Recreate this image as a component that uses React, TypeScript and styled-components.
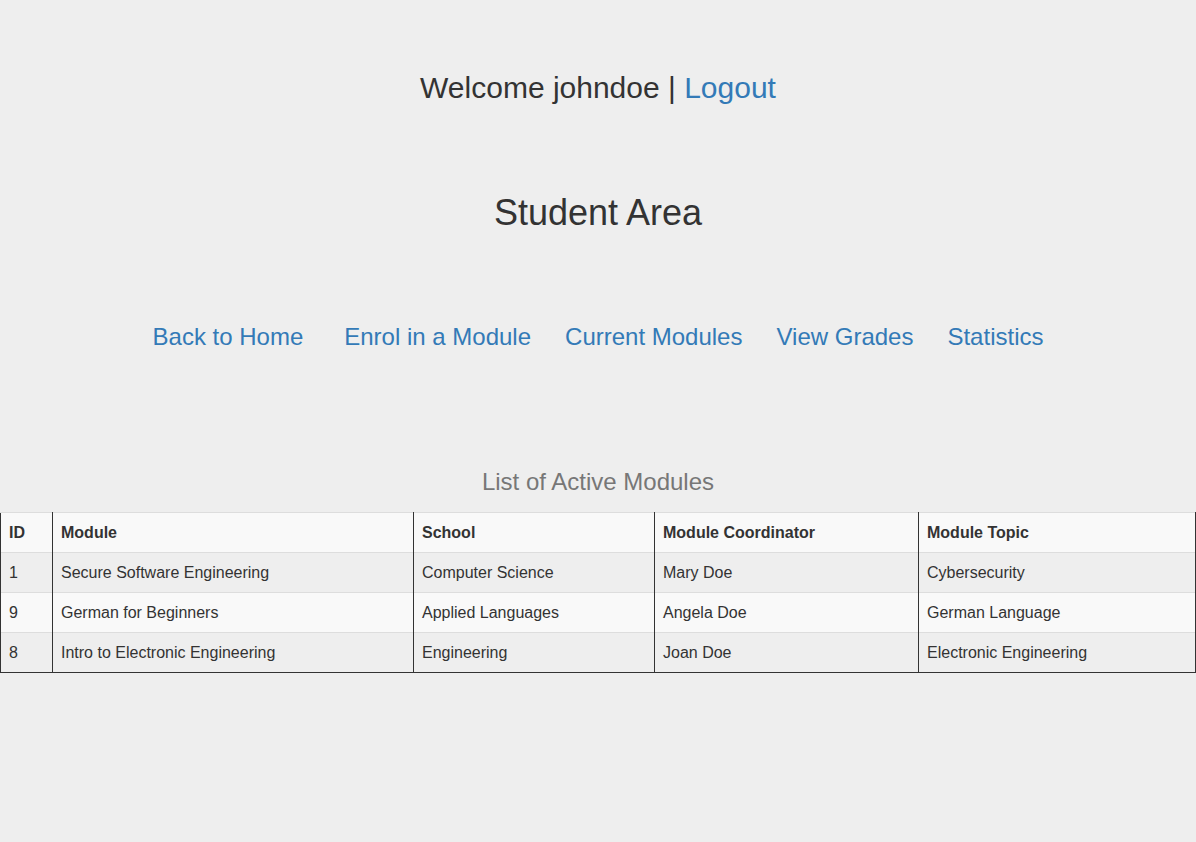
import React from "react";
import styled, { createGlobalStyle } from "styled-components";

const Global = createGlobalStyle`
  html, body { margin: 0; padding: 0; background: #eeeeee; }
  body { font-family: "Liberation Sans", Arial, Helvetica, sans-serif; color: #333333; }
  * { box-sizing: border-box; }
`;

const Page = styled.div`
  display: flex;
  flex-direction: column;
  align-items: center;
  padding-top: 71px;
  min-height: 842px;
`;

const Welcome = styled.h2`
  margin: 0;
  font-size: 30px;
  font-weight: 400;
  line-height: 33px;
  text-align: center;
`;

const Link = styled.a`
  color: #337ab7;
  text-decoration: none;
  cursor: pointer;
`;

const Title = styled.h1`
  margin: 89px 0 0;
  font-size: 36px;
  font-weight: 400;
  line-height: 40px;
`;

const Nav = styled.nav`
  margin-top: 90px;
  display: flex;
  gap: 34px;
  font-size: 24px;
  line-height: 27px;
`;

const NavLink = styled(Link)<{ $extra?: boolean }>`
  margin-right: ${(p) => (p.$extra ? "7px" : "0")};
`;

const ListTitle = styled.h3`
  margin: 118px 0 0;
  font-size: 24px;
  font-weight: 400;
  line-height: 27px;
  color: #777777;
`;

const Table = styled.table`
  margin-top: 17px;
  width: 100%;
  border-collapse: collapse;
  table-layout: fixed;
  font-size: 16px;
  border-bottom: 1px solid #333;
  border-right: 1px solid #333;
`;

const Th = styled.th<{ $w?: number }>`
  width: ${(p) => (p.$w ? `${p.$w}px` : "auto")};
  text-align: left;
  font-weight: 700;
  padding: 0 8px;
  height: 40px;
  border-top: 1px solid #dddddd;
  border-left: 1px solid #333;
  border-right: 1px solid #333;
`;

const Tr = styled.tr<{ $odd: boolean }>`
  background: ${(p) => (p.$odd ? "#eeeeee" : "#f9f9f9")};
`;

const HeadRow = styled.tr`
  background: #f9f9f9;
`;

const Td = styled.td`
  padding: 0 8px;
  height: 40px;
  border-top: 1px solid #dddddd;
  border-left: 1px solid #333;
  border-right: 1px solid #333;
  white-space: nowrap;
`;

const cols: { label: string; w?: number }[] = [
  { label: "ID", w: 52 },
  { label: "Module", w: 361 },
  { label: "School", w: 241 },
  { label: "Module Coordinator", w: 264 },
  { label: "Module Topic" },
];

const rows = [
  ["1", "Secure Software Engineering", "Computer Science", "Mary Doe", "Cybersecurity"],
  ["9", "German for Beginners", "Applied Languages", "Angela Doe", "German Language"],
  ["8", "Intro to Electronic Engineering", "Engineering", "Joan Doe", "Electronic Engineering"],
];

export default function App() {
  return (
    <>
      <Global />
      <Page>
        <Welcome>
          Welcome johndoe | <Link>Logout</Link>
        </Welcome>
        <Title>Student Area</Title>
        <Nav>
          <NavLink $extra>Back to Home</NavLink>
          <NavLink>Enrol in a Module</NavLink>
          <NavLink>Current Modules</NavLink>
          <NavLink>View Grades</NavLink>
          <NavLink>Statistics</NavLink>
        </Nav>
        <ListTitle>List of Active Modules</ListTitle>
        <Table>
          <thead>
            <HeadRow>
              {cols.map((c) => (
                <Th key={c.label} $w={c.w}>
                  {c.label}
                </Th>
              ))}
            </HeadRow>
          </thead>
          <tbody>
            {rows.map((r, i) => (
              <Tr key={i} $odd={i % 2 === 0}>
                {r.map((cell, j) => (
                  <Td key={j}>{cell}</Td>
                ))}
              </Tr>
            ))}
          </tbody>
        </Table>
      </Page>
    </>
  );
}
